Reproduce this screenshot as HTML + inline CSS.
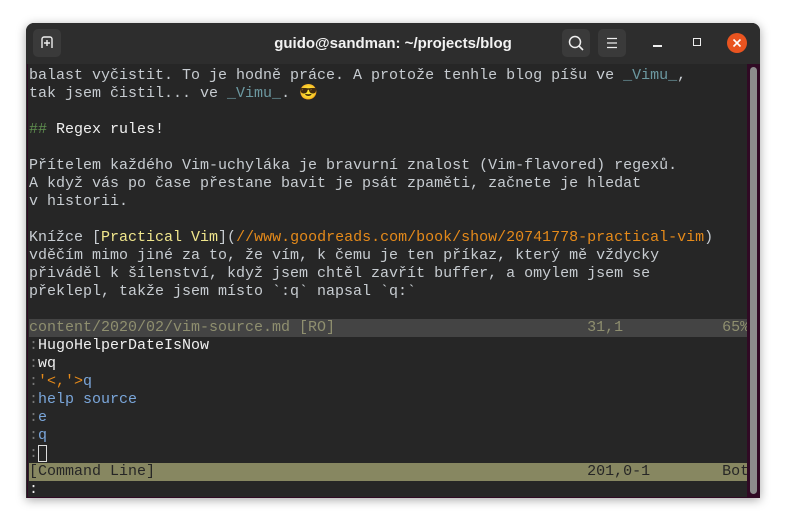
<!DOCTYPE html>
<html><head><meta charset="utf-8"><style>
body{margin:0;width:786px;height:527px;background:#fff;position:relative;overflow:hidden}
.win{position:absolute;left:26px;top:23px;width:734px;height:475px;background:#2b2b2b;border-radius:8px 8px 0 0;box-shadow:0 2px 10px rgba(0,0,0,.35)}
.title{position:absolute;left:0;top:0;width:734px;height:41px;background:#2d2d2d;border-radius:8px 8px 0 0;color:#f2f2f2;font:bold 15px "Liberation Sans",sans-serif;text-align:center;line-height:41px}
.btn{position:absolute;top:6px;width:28px;height:28px;background:#3a3a3a;border-radius:5px}
.term{position:absolute;left:1px;top:41px;width:720px;height:433px;background:#262626;border-left:1px solid #300a24;border-bottom:1px solid #300a24;overflow:hidden}
.sb{position:absolute;left:721px;top:41px;width:13px;height:434px;background:#300a24}
.thumb{position:absolute;left:3px;top:3px;width:7px;height:427px;background:#8c8c8c;border-radius:4px}
pre{margin:0;position:absolute;left:1px;top:3px;font:15px/18px "Liberation Mono","DejaVu Sans Mono",monospace;color:#c7ccd1;white-space:pre}
.u{color:#6c98a0}.g{color:#5f8f4f}.w{color:#f0f0f0}.o{color:#e58a1a}.y{color:#f0e68c}.b{color:#7aa6da}.d{color:#777}
.st{display:block;background:#444;color:#8f8f6f;width:720px}
.cl{display:block;background:#878761;color:#262626;width:720px}
</style></head><body>
<div class="win">
<div class="title">guido@sandman: ~/projects/blog</div>
<div class="btn" style="left:7px"><svg width="28" height="28"><path d="M9 19V10a2 2 0 0 1 2-2h6a2 2 0 0 1 2 2v9M14 11v6M11 14h6" stroke="#eee" stroke-width="1.4" fill="none"/></svg></div>
<div class="btn" style="left:536px"><svg width="28" height="28"><circle cx="13" cy="13" r="5.5" stroke="#eee" stroke-width="1.5" fill="none"/><path d="M17 17l4 4" stroke="#eee" stroke-width="1.6"/></svg></div>
<div class="btn" style="left:572px"><svg width="28" height="28"><path d="M9 9.5h10M9 14h10M9 18.5h10" stroke="#eee" stroke-width="1.3"/></svg></div>
<div style="position:absolute;left:627px;top:22px;width:9px;height:1.5px;background:#eee"></div>
<div style="position:absolute;left:667px;top:15px;width:6px;height:6px;border:1.5px solid #eee"></div>
<div style="position:absolute;left:701px;top:10px;width:20px;height:20px;border-radius:50%;background:#e95420"><svg width="20" height="20"><path d="M6.5 6.5l7 7M13.5 6.5l-7 7" stroke="#fff" stroke-width="1.6"/></svg></div>
<div class="term"><pre>balast vyčistit. To je hodně práce. A protože tenhle blog píšu ve <span class="u">_Vimu_</span>,
tak jsem čistil... ve <span class="u">_Vimu_</span>. 😎

<span class="g">##</span><span class="w"> Regex rules!</span>

Přítelem každého Vim-uchyláka je bravurní znalost (Vim-flavored) regexů.
A když vás po čase přestane bavit je psát zpaměti, začnete je hledat
v historii.

Knížce [<span class="y">Practical Vim</span>](<span class="o">//www.goodreads.com/book/show/20741778-practical-vim</span>)
vděčím mimo jiné za to, že vím, k čemu je ten příkaz, který mě vždycky
přiváděl k šílenství, když jsem chtěl zavřít buffer, a omylem jsem se
překlepl, takže jsem místo `:q` napsal `q:`

<span class="st">content/2020/02/vim-source.md [RO]                            31,1           65%</span><span class="d">:</span><span class="w">HugoHelperDateIsNow</span>
<span class="d">:</span><span class="w">wq</span>
<span class="d">:</span><span class="o">'&lt;,'&gt;</span><span class="b">q</span>
<span class="d">:</span><span class="b">help source</span>
<span class="d">:</span><span class="b">e</span>
<span class="d">:</span><span class="b">q</span>
<span class="d">:</span><span style="outline:1px solid #ddd;outline-offset:-1px"> </span>
<span class="cl">[Command Line]                                                201,0-1        Bot</span><span class="w">:</span></pre></div>
<div class="sb"><div class="thumb"></div></div>
</div>
</body></html>
